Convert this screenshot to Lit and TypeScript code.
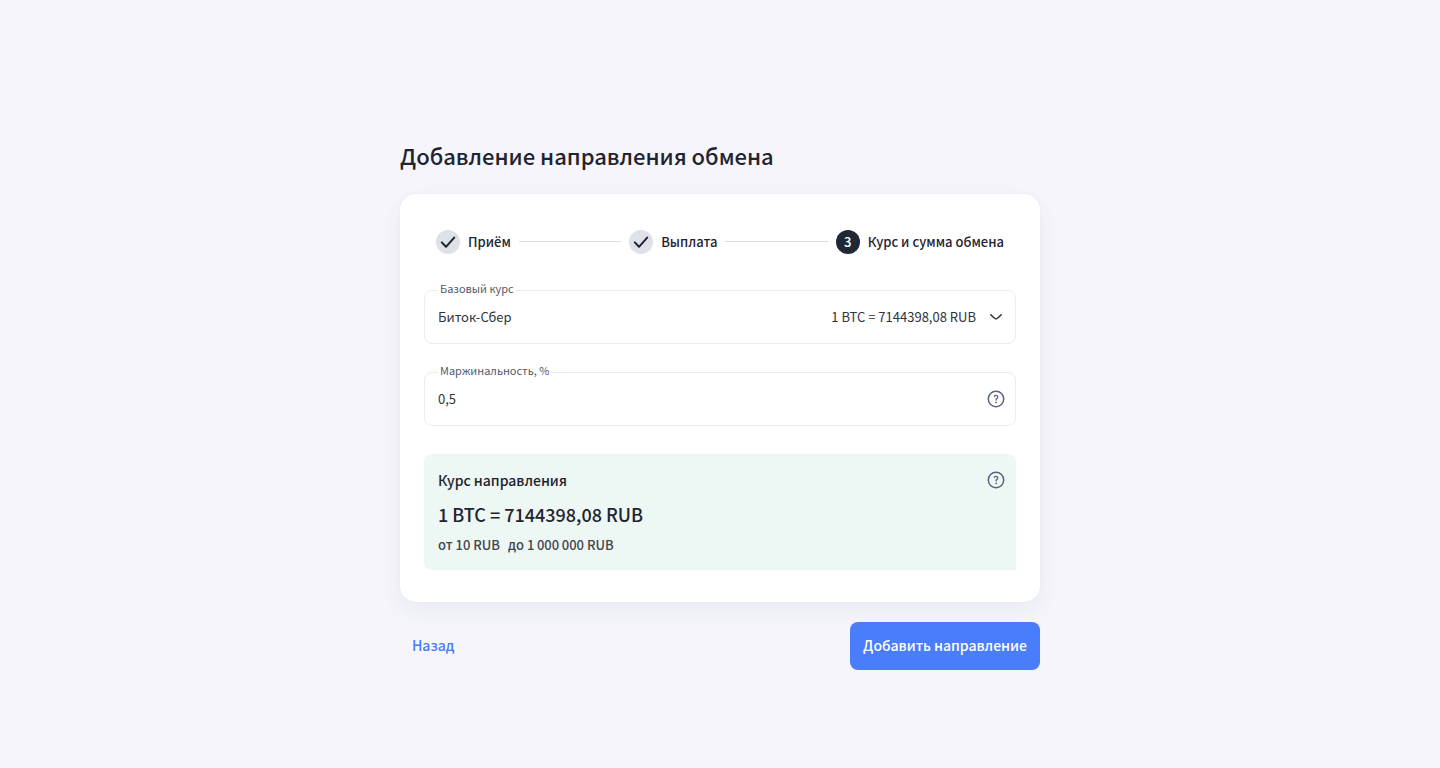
import { LitElement, html, css } from "lit";
import { customElement, property, state } from "lit/decorators.js";
import { classMap } from "lit/directives/class-map.js";

const checkIcon = html`<svg width="24" height="24" viewBox="0 0 24 24" fill="none" aria-hidden="true">
  <path d="M5.8 12.4 10 16.8 18.2 7.6" stroke="currentColor" stroke-width="2" stroke-linecap="round" stroke-linejoin="round" />
</svg>`;

const chevronIcon = html`<svg width="16" height="16" viewBox="0 0 16 16" fill="none" aria-hidden="true">
  <path d="M2.8 5.8 Q7 9.9 8 9.9 Q9 9.9 13.2 5.8" stroke="currentColor" stroke-width="1.6" stroke-linecap="round" stroke-linejoin="round" />
</svg>`;

const helpIcon = html`<svg width="18" height="18" viewBox="0 0 18 18" fill="none" aria-hidden="true">
  <circle cx="9" cy="9" r="7.7" stroke="currentColor" stroke-width="1.5" />
  <path d="M7.3 6.3C7.7 5.7 8.3 5.4 9 5.4c1.1 0 1.8.6 1.8 1.5 0 1.3-1.7 1.5-1.7 3.1" stroke="currentColor" stroke-width="1.3" stroke-linecap="round" />
  <circle cx="9.1" cy="12.3" r=".9" fill="currentColor" />
</svg>`;

@customElement("step-list")
export class StepList extends LitElement {
  static styles = css`
    :host { display: block; }
    .steps { display: flex; align-items: center; gap: 8px; margin: 0; padding: 12px; list-style: none; }
    .step { display: flex; align-items: center; gap: 8px; white-space: nowrap; font-size: 13px; line-height: 24px; font-weight: 500; }
    .mark { display: flex; align-items: center; justify-content: center; width: 24px; height: 24px; border-radius: 50%; background: #dfe1e9; }
    .current .mark { background: #1f2835; color: #fff; }
    .line { flex: 1; height: 1px; padding-bottom: 1px; background: #dcdce6 content-box; }
  `;

  @property({ attribute: false }) steps: string[] = [];
  @property({ type: Number }) current = 0;

  render() {
    return html`<ol class="steps">
      ${this.steps.map((name, i) => html`
        ${i ? html`<li class="line" role="presentation"></li>` : ""}
        <li class=${classMap({ step: true, current: i === this.current })}>
          <span class="mark">${i < this.current ? checkIcon : i + 1}</span>
          <span>${name}</span>
        </li>`)}
    </ol>`;
  }
}

@customElement("app-root")
export class AppRoot extends LitElement {
  static styles = css`
    :host {
      display: block; box-sizing: border-box; min-height: 100vh; padding: 139px 16px 24px;
      background: #f5f5fb; color: #1f2430;
      font-family: "Noto Sans CJK SC", "Noto Sans", sans-serif;
    }
    .page { max-width: 640px; margin: 0 auto; }
    .title { margin: 0 0 23px; font-size: 22px; line-height: 32px; font-weight: 500; }
    .card {
      padding: 24px 24px 32px; border-radius: 16px; background: #fff;
      box-shadow: 0 8px 24px rgba(40, 44, 80, .06), 0 0 2px rgba(40, 44, 80, .05);
    }
    .fields { display: grid; gap: 28px; margin-top: 24px; }
    .field {
      position: relative; display: grid; align-items: center; height: 54px; box-sizing: border-box;
      border: 1px solid #ececf1; border-radius: 8px;
    }
    .label {
      position: absolute; top: -11px; left: 13px; padding: 0 2px; background: #fff;
      color: #555968; font-size: 11px; line-height: 16px;
    }
    .control {
      grid-area: 1 / 1; width: 100%; height: 52px; box-sizing: border-box; margin: 0; padding: 0 13px 2px; appearance: none;
      border: 0; border-radius: 8px; background: none; color: #2f3340; font-family: inherit; font-size: 13px;
    }
    .trail {
      grid-area: 1 / 1; justify-self: end; display: flex; align-items: center; gap: 12px;
      padding-right: 11px; color: #2f3340; font-size: 13px; line-height: 20px; pointer-events: none;
    }
    .help {
      display: flex; padding: 0; border: 0; background: none; color: #5b6380; cursor: pointer; pointer-events: auto;
    }
    .field .trail.narrow { padding-right: 10px; }
    .rate { padding: 16px 14px 15px; border-radius: 8px 8px 0 8px; background: #edf7f3; }
    .head { display: flex; align-items: center; justify-content: space-between; margin-right: -3px; }
    .name { margin: 0; font-size: 14px; line-height: 20px; font-weight: 500; }
    .value { margin: 9px 0 6px; font-size: 18px; line-height: 30px; font-weight: 500; }
    .limits { display: flex; gap: 8px; margin: 0; color: #42464f; font-size: 13px; line-height: 20px; font-weight: 500; }
    .actions { display: flex; align-items: center; justify-content: space-between; margin-top: 20px; }
    .btn {
      height: 48px; padding: 0 13px 2px; border: 0; border-radius: 8px; font-family: inherit; font-size: 14px;
      font-weight: 500; cursor: pointer;
    }
    .back { padding: 0 12px 2px; background: none; color: #477bfa; }
    .submit { background: #4a7dfb; color: #fff; }
  `;

  @state() private margin = "0,5";

  render() {
    return html`<main class="page">
      <h1 class="title">Добавление направления обмена</h1>
      <section class="card">
        <step-list .steps=${["Приём", "Выплата", "Курс и сумма обмена"]} .current=${2}></step-list>
        <div class="fields">
          <div class="field">
            <label class="label" for="base">Базовый курс</label>
            <select class="control" id="base"><option>Биток-Сбер</option></select>
            <span class="trail"><span>1 BTC = 7144398,08 RUB</span>${chevronIcon}</span>
          </div>
          <div class="field">
            <label class="label" for="margin">Маржинальность, %</label>
            <input class="control" id="margin" inputmode="decimal" .value=${this.margin}
              @input=${(e: Event) => (this.margin = (e.target as HTMLInputElement).value)} />
            <span class="trail narrow"><button class="help" type="button" aria-label="Справка">${helpIcon}</button></span>
          </div>
          <section class="rate">
            <div class="head">
              <h2 class="name">Курс направления</h2>
              <button class="help" type="button" aria-label="Справка">${helpIcon}</button>
            </div>
            <p class="value">1 BTC = 7144398,08 RUB</p>
            <p class="limits"><span>от 10 RUB</span><span>до 1&#8201;000&#8201;000 RUB</span></p>
          </section>
        </div>
      </section>
      <div class="actions">
        <button class="btn back" type="button">Назад</button>
        <button class="btn submit" type="button">Добавить направление</button>
      </div>
    </main>`;
  }
}
